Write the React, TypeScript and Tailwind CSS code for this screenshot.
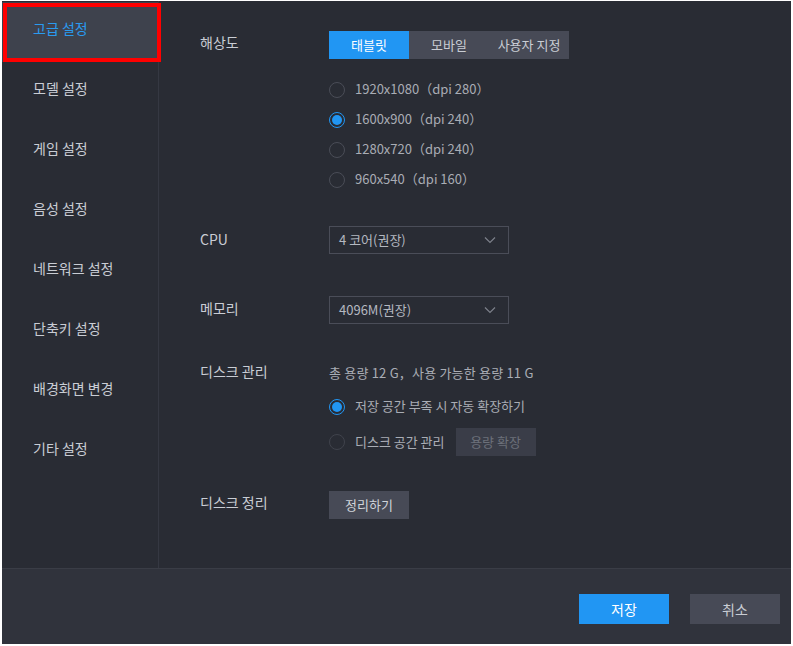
import React from 'react';

const menu = ['고급 설정', '모델 설정', '게임 설정', '음성 설정', '네트워크 설정', '단축키 설정', '배경화면 변경', '기타 설정'];
const resolutions = ['1920x1080（dpi 280）', '1600x900（dpi 240）', '1280x720（dpi 240）', '960x540（dpi 160）'];

const Radio: React.FC<{ checked?: boolean; dim?: boolean }> = ({ checked, dim }) =>
  checked ? (
    <span className="w-[16px] h-[16px] rounded-full border-[1.5px] border-[#2196f3] flex items-center justify-center shrink-0">
      <span className="w-[10px] h-[10px] rounded-full bg-[#2196f3]" />
    </span>
  ) : (
    <span className={`w-[16px] h-[16px] rounded-full border-[1.5px] shrink-0 ${dim ? 'border-[#40434c]' : 'border-[#4a4d57]'}`} />
  );

const Chevron = () => (
  <svg width="12" height="8" viewBox="0 0 12 8" fill="none">
    <path d="M1 1.5 6 6.5 11 1.5" stroke="#7c808a" strokeWidth="1.2" />
  </svg>
);

const Select: React.FC<{ value: string }> = ({ value }) => (
  <div className="w-[180px] h-[28px] border border-[#4a4d58] flex items-center justify-between pl-[9px] pr-[12px] pb-[1px] text-[13px] text-[#b4b8c0]">
    <span>{value}</span>
    <Chevron />
  </div>
);

const App: React.FC = () => {
  return (
    <div
      className="relative w-[793px] h-[646px] bg-white pt-[1px] px-[2px] pb-[2px]"
      style={{ fontFamily: '"Noto Sans CJK KR", "Noto Sans", sans-serif' }}
    >
      <div className="w-full h-full flex flex-col bg-[#292c34]">
        {/* body */}
        <div className="flex h-[567px]">
          {/* sidebar */}
          <div className="w-[156px] pt-[1px]">
            {menu.map((m, i) => (
              <div
                key={m}
                className={`h-[60px] pl-[31px] pt-[16px] text-[14px] leading-[20px] ${
                  i === 0 ? 'bg-[#3e424d] text-[#2a9bf0]' : 'text-[#c9cdd4]'
                }`}
              >
                {m}
              </div>
            ))}
          </div>
          <div className="w-px bg-[#353842]" />

          {/* content */}
          <div className="flex-1 pl-[41px] pt-[30px] text-[14px] text-[#c9cdd4]">
            <div className="flex h-[28px]">
              <div className="w-[129px] leading-[22px]">해상도</div>
              <div className="flex text-[13px]">
                <div className="w-[80px] h-[28px] flex items-center justify-center bg-[#2196f3] text-white">태블릿</div>
                <div className="w-[80px] h-[28px] flex items-center justify-center bg-[#474a56] text-[#c9cdd4]">모바일</div>
                <div className="w-[80px] h-[28px] flex items-center justify-center bg-[#474a56] text-[#c9cdd4]">사용자 지정</div>
              </div>
            </div>

            <div className="mt-[16px] ml-[129px]">
              {resolutions.map((r, i) => (
                <div key={r} className="h-[30px] flex items-center gap-[10px] text-[13px] text-[#a9adb5]">
                  <Radio checked={i === 1} />
                  <span className="pb-[2px]">{r}</span>
                </div>
              ))}
            </div>

            <div className="mt-[31px] flex items-center h-[28px]">
              <div className="w-[129px] pb-[2px]">CPU</div>
              <Select value="4 코어(권장)" />
            </div>

            <div className="mt-[42px] flex items-center h-[28px]">
              <div className="w-[129px] pb-[3px]">메모리</div>
              <Select value="4096M(권장)" />
            </div>

            <div className="mt-[38px] flex h-[22px] items-center">
              <div className="w-[129px] pb-[3px]">디스크 관리</div>
              <div className="text-[13px] text-[#a9adb5] tracking-[0.2px] pb-[1px]">총 용량 12 G，사용 가능한 용량 11 G</div>
            </div>
            <div className="ml-[129px] mt-[8px] h-[30px] flex items-center gap-[10px] text-[13px] text-[#a9adb5]">
              <Radio checked />
              <span className="pb-[2px]">저장 공간 부족 시 자동 확장하기</span>
            </div>
            <div className="ml-[129px] mt-[6px] h-[28px] flex items-center text-[13px]">
              <Radio dim />
              <span className="ml-[10px] text-[#a9adb5] pb-[1px]">디스크 공간 관리</span>
              <div className="ml-[11px] w-[80px] h-[28px] flex items-center justify-center bg-[#3a3d48] text-[#6c707a]">용량 확장</div>
            </div>

            <div className="mt-[35px] flex items-center h-[28px]">
              <div className="w-[129px] pb-[6px]">디스크 정리</div>
              <div className="w-[80px] h-[28px] flex items-center justify-center bg-[#474a56] text-[13px] text-[#d0d4da]">정리하기</div>
            </div>
          </div>
        </div>

        {/* footer */}
        <div className="flex-1 bg-[#30333c] border-t border-[#3a3d46] flex justify-end items-start pt-[25px] pr-[11px] gap-[21px] text-[14px]">
          <button className="w-[90px] h-[30px] bg-[#2196f3] text-white">저장</button>
          <button className="w-[90px] h-[30px] bg-[#474a56] text-[#c9cdd4]">취소</button>
        </div>
      </div>

      {/* annotation box */}
      <div className="absolute left-[3px] top-[3px] w-[158px] h-[59px] border-4 border-[#ff0000] pointer-events-none" />
    </div>
  );
};

export default App;
